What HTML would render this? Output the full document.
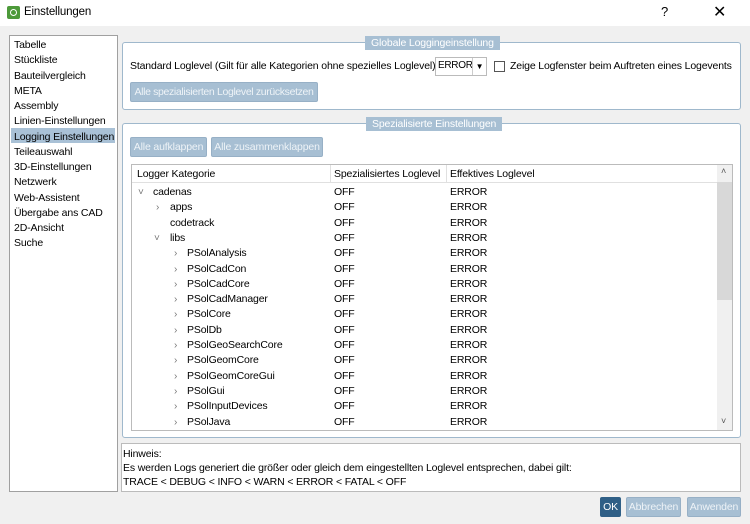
<!DOCTYPE html>
<html><head><meta charset="utf-8"><style>
*{box-sizing:border-box;margin:0;padding:0}
body{width:750px;height:524px;background:#f0f0f0;font-family:"Liberation Sans",sans-serif;font-size:10.5px;letter-spacing:-0.15px;color:#000;position:relative;overflow:hidden}
.a{position:absolute;white-space:nowrap}
.box{position:absolute;background:#fff;border:1px solid #a0a0a0}
.grp{position:absolute;border:1px solid #9fb8cc;border-radius:3px;background:#fff}
.gt{position:absolute;background:#a7bfd3;color:#fff;height:14px;line-height:14px;padding:0 6px;white-space:nowrap}
.btn{position:absolute;background:#a7bfd3;color:#eef3f7;border:1px solid #97b0c6;border-radius:2px;height:20px;line-height:18px;text-align:center;white-space:nowrap;overflow:hidden}
.r{position:absolute;height:15px;line-height:15px;left:0;width:585px;white-space:nowrap}
.r span{position:absolute}
.c2{left:202px}.c3{left:318px}
.chev{color:#777;font-size:10px}
</style></head><body>
<div class="a" style="left:0;top:0;width:750px;height:26px;background:#fff"></div>
<div class="a" style="left:7px;top:6px;width:13px;height:13px;background:#4d9a3a;border-radius:2px"><div style="position:absolute;left:3px;top:3px;width:7px;height:7px;border:1.5px solid #fff;border-radius:50%"></div></div>
<div class="a" style="left:24px;top:6px;font-size:11.5px">Einstellungen</div>
<div class="a" style="left:661px;top:4px;font-size:13px">?</div>
<div class="a" style="left:713px;top:2px;font-size:16px">✕</div>

<div class="box" style="left:9px;top:35px;width:109px;height:457px"></div>
<div class="a" style="left:11px;top:128px;width:104px;height:15px;background:#a9c1d6"></div>
<div class="a" style="left:14px;top:38px;line-height:15.25px">Tabelle<br>Stückliste<br>Bauteilvergleich<br>META<br>Assembly<br>Linien-Einstellungen<br>Logging Einstellungen<br>Teileauswahl<br>3D-Einstellungen<br>Netzwerk<br>Web-Assistent<br>Übergabe ans CAD<br>2D-Ansicht<br>Suche</div>

<div class="grp" style="left:122px;top:42px;width:619px;height:68px"></div>
<div class="gt" style="left:365px;top:36px">Globale Loggingeinstellung</div>
<div class="a" style="left:130px;top:60px">Standard Loglevel (Gilt für alle Kategorien ohne spezielles Loglevel):</div>
<div class="a" style="left:435px;top:57px;width:52px;height:19px;border:1px solid #bbb;background:#fff"><span style="position:absolute;left:2px;top:2px;font-size:10px;letter-spacing:-0.3px">ERROR</span><span style="position:absolute;left:36px;top:0;height:17px;border-left:1px solid #ccc;width:14px;text-align:center;font-size:8px;line-height:17px;background:#fff">▼</span></div>
<div class="a" style="left:494px;top:61px;width:11px;height:11px;border:1px solid #555;background:#fff"></div>
<div class="a" style="left:510px;top:60px">Zeige Logfenster beim Auftreten eines Logevents</div>
<div class="btn" style="left:130px;top:82px;width:188px;letter-spacing:-0.35px">Alle spezialisierten Loglevel zurücksetzen</div>

<div class="grp" style="left:122px;top:123px;width:619px;height:315px"></div>
<div class="gt" style="left:366px;top:117px">Spezialisierte Einstellungen</div>
<div class="btn" style="left:130px;top:137px;width:77px">Alle aufklappen</div>
<div class="btn" style="left:211px;top:137px;width:112px">Alle zusammenklappen</div>

<div class="box" style="left:131px;top:164px;width:602px;height:267px;border-color:#bbb;overflow:hidden">
<div class="a" style="left:0;top:0;width:585px;height:18px;border-bottom:1px solid #e0e0e0"></div>
<div class="a" style="left:198px;top:0;height:18px;border-left:1px solid #e0e0e0"></div>
<div class="a" style="left:314px;top:0;height:18px;border-left:1px solid #e0e0e0"></div>
<div class="a" style="left:5px;top:3px">Logger Kategorie</div>
<div class="a" style="left:202px;top:3px">Spezialisiertes Loglevel</div>
<div class="a" style="left:318px;top:3px">Effektives Loglevel</div>
<div class="a" style="left:585px;top:0;width:15px;height:265px;background:#f0f0f0"></div>
<div class="a" style="left:585px;top:17px;width:15px;height:118px;background:#d8d8d8"></div>
<div class="a" style="left:589px;top:1px;font-size:9px;color:#555">˄</div>
<div class="a" style="left:589px;top:251px;font-size:9px;color:#555">˅</div>
<div class="a" style="left:0;top:20px;width:585px">
<div class="r" style="top:0"><span class="chev" style="left:6px">˅</span><span style="left:21px">cadenas</span><span class="c2">OFF</span><span class="c3">ERROR</span></div>
<div class="r" style="top:15.3px"><span class="chev" style="left:24px">›</span><span style="left:38px">apps</span><span class="c2">OFF</span><span class="c3">ERROR</span></div>
<div class="r" style="top:30.6px"><span style="left:38px">codetrack</span><span class="c2">OFF</span><span class="c3">ERROR</span></div>
<div class="r" style="top:45.9px"><span class="chev" style="left:22px">˅</span><span style="left:38px">libs</span><span class="c2">OFF</span><span class="c3">ERROR</span></div>
<div class="r" style="top:61.2px"><span class="chev" style="left:42px">›</span><span style="left:55px">PSolAnalysis</span><span class="c2">OFF</span><span class="c3">ERROR</span></div>
<div class="r" style="top:76.5px"><span class="chev" style="left:42px">›</span><span style="left:55px">PSolCadCon</span><span class="c2">OFF</span><span class="c3">ERROR</span></div>
<div class="r" style="top:91.8px"><span class="chev" style="left:42px">›</span><span style="left:55px">PSolCadCore</span><span class="c2">OFF</span><span class="c3">ERROR</span></div>
<div class="r" style="top:107.1px"><span class="chev" style="left:42px">›</span><span style="left:55px">PSolCadManager</span><span class="c2">OFF</span><span class="c3">ERROR</span></div>
<div class="r" style="top:122.4px"><span class="chev" style="left:42px">›</span><span style="left:55px">PSolCore</span><span class="c2">OFF</span><span class="c3">ERROR</span></div>
<div class="r" style="top:137.7px"><span class="chev" style="left:42px">›</span><span style="left:55px">PSolDb</span><span class="c2">OFF</span><span class="c3">ERROR</span></div>
<div class="r" style="top:153px"><span class="chev" style="left:42px">›</span><span style="left:55px">PSolGeoSearchCore</span><span class="c2">OFF</span><span class="c3">ERROR</span></div>
<div class="r" style="top:168.3px"><span class="chev" style="left:42px">›</span><span style="left:55px">PSolGeomCore</span><span class="c2">OFF</span><span class="c3">ERROR</span></div>
<div class="r" style="top:183.6px"><span class="chev" style="left:42px">›</span><span style="left:55px">PSolGeomCoreGui</span><span class="c2">OFF</span><span class="c3">ERROR</span></div>
<div class="r" style="top:198.9px"><span class="chev" style="left:42px">›</span><span style="left:55px">PSolGui</span><span class="c2">OFF</span><span class="c3">ERROR</span></div>
<div class="r" style="top:214.2px"><span class="chev" style="left:42px">›</span><span style="left:55px">PSolInputDevices</span><span class="c2">OFF</span><span class="c3">ERROR</span></div>
<div class="r" style="top:229.5px"><span class="chev" style="left:42px">›</span><span style="left:55px">PSolJava</span><span class="c2">OFF</span><span class="c3">ERROR</span></div>
</div>
</div>

<div class="box" style="left:121px;top:443px;width:620px;height:49px;border-color:#bbb"></div>
<div class="a" style="left:123px;top:447px;line-height:14px">Hinweis:<br>Es werden Logs generiert die größer oder gleich dem eingestellten Loglevel entsprechen, dabei gilt:<br>TRACE &lt; DEBUG &lt; INFO &lt; WARN &lt; ERROR &lt; FATAL &lt; OFF</div>

<div class="btn" style="left:600px;top:497px;width:21px;background:#2f5f86;border-color:#2f5f86;color:#fff">OK</div>
<div class="btn" style="left:626px;top:497px;width:55px">Abbrechen</div>
<div class="btn" style="left:687px;top:497px;width:54px">Anwenden</div>
</body></html>
